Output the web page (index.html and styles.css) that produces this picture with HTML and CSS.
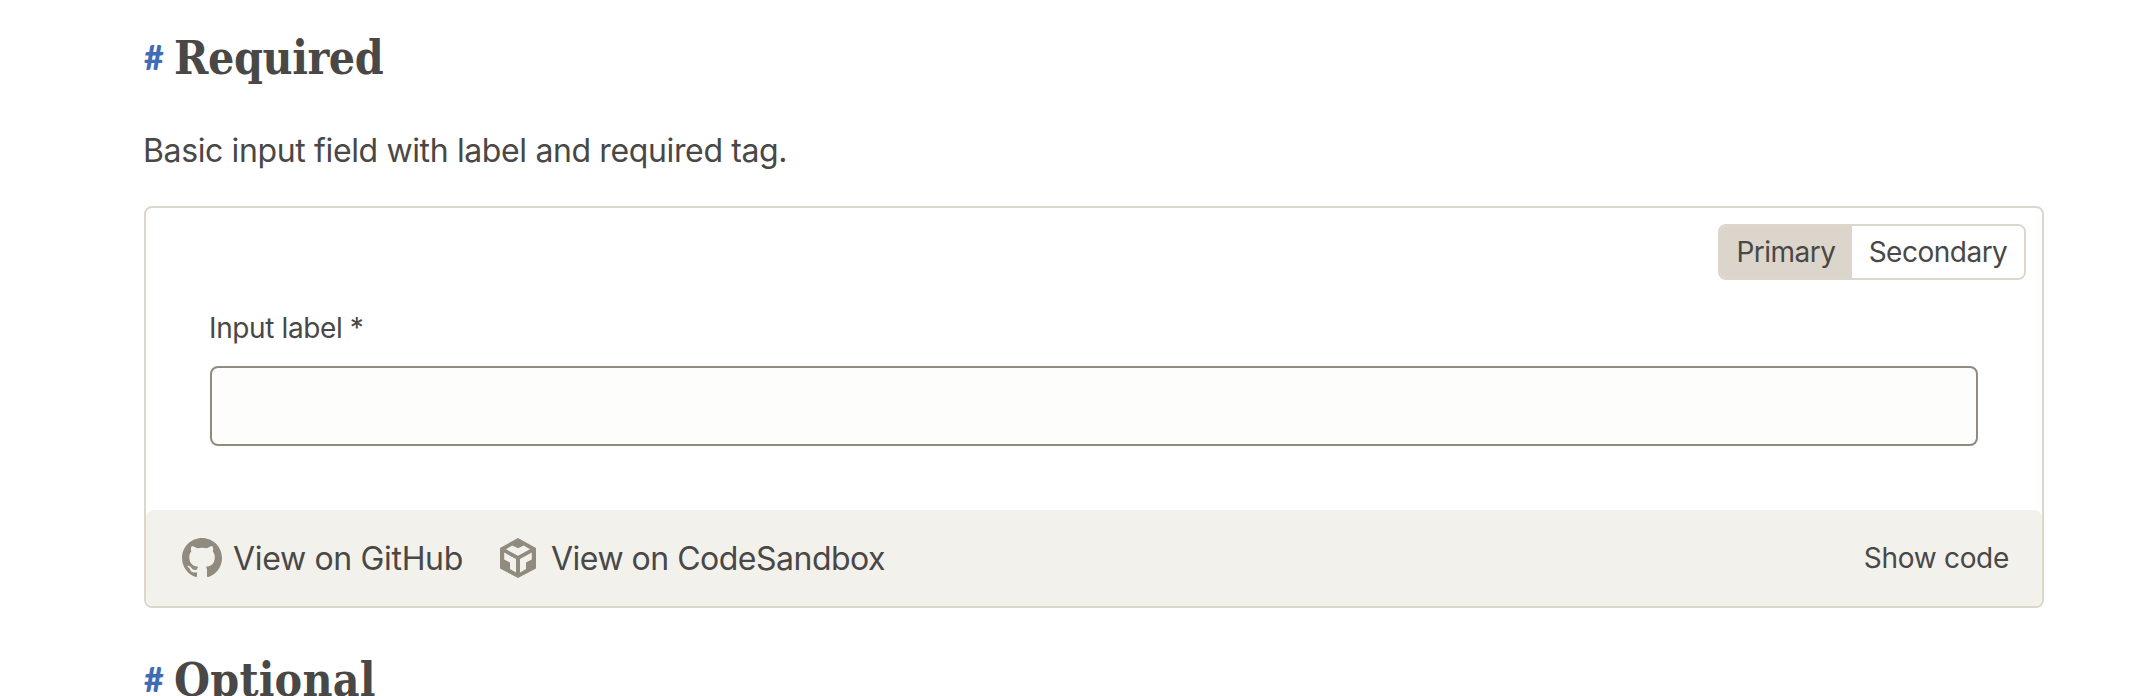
FILE: index.html
```
<!DOCTYPE html>
<html lang="en">
<head>
<meta charset="utf-8">
<title>Input</title>
<link rel="stylesheet" href="styles.css">
</head>
<body>
<main class="page">
  <h2 class="heading"><a class="anchor" href="#required">#</a><span class="title title-required">Required</span></h2>
  <p class="description">Basic input field with label and required tag.</p>
  <section class="card">
    <div class="preview">
      <div class="toggle">
        <button class="option option-active">Primary</button>
        <button class="option">Secondary</button>
      </div>
      <div class="field">
        <label class="label" for="demo">Input label *</label>
        <input class="input" id="demo" type="text">
      </div>
    </div>
    <footer class="footer">
      <a class="link link-github">
        <svg class="icon" viewBox="0 0 16 16"><path fill-rule="evenodd" d="M8 0C3.58 0 0 3.58 0 8c0 3.54 2.29 6.53 5.47 7.59.4.07.55-.17.55-.38 0-.19-.01-.82-.01-1.49-2.01.37-2.53-.49-2.69-.94-.09-.23-.48-.94-.82-1.13-.28-.15-.68-.52-.01-.53.63-.01 1.08.58 1.23.82.72 1.21 1.87.87 2.33.66.07-.52.28-.87.51-1.07-1.78-.2-3.64-.89-3.64-3.95 0-.87.31-1.59.82-2.15-.08-.2-.36-1.02.08-2.12 0 0 .67-.21 2.2.82.64-.18 1.32-.27 2-.27s1.36.09 2 .27c1.53-1.04 2.2-.82 2.2-.82.44 1.1.16 1.92.08 2.12.51.56.82 1.27.82 2.15 0 3.07-1.87 3.75-3.65 3.95.29.25.54.73.54 1.48 0 1.07-.01 1.93-.01 2.2 0 .21.15.46.55.38A8.01 8.01 0 0 0 16 8c0-4.42-3.58-8-8-8z"/></svg>
        View on GitHub
      </a>
      <a class="link link-sandbox">
        <svg class="icon icon-cube" viewBox="0 0 36 40"><path fill-rule="evenodd" d="M18 0L36 10V30.500L18 40L0 30.500V10ZM6 11.300L18 17.800L30 11.300L23.700 7.400L18 10.300L12.300 7.400ZM4.200 14.600V21.500L10 24.600V31L16 34.500V21ZM31.800 14.600L20 21V34.500L26 31V24.600L31.800 21.500Z"/></svg>
        View on CodeSandbox
      </a>
      <a class="show">Show code</a>
    </footer>
  </section>
  <h2 class="heading heading-next"><a class="anchor" href="#optional">#</a><span class="title title-optional">Optional</span></h2>
</main>
</body>
</html>
```
FILE: styles.css
```
* { box-sizing: border-box; }
body { margin: 0; background: #fff; color: #494846; font-family: Inter, "Liberation Sans", sans-serif; height: 696px; overflow: hidden; }
.page { padding: 28px 90px 0 144px; }
.heading { display: flex; align-items: flex-start; margin: 0; height: 60px; line-height: 60px; }
.anchor { width: 30px; color: #3f6db5; font-family: Lato, sans-serif; font-size: 34px; line-height: 58px; font-weight: 900; text-decoration: none; }
.title { font-family: "DejaVu Serif Condensed", "DejaVu Serif", serif; font-size: 46px; font-weight: 700; }
.title-required { letter-spacing: -.4px; }
.title-optional { letter-spacing: .2px; }
.description { margin: 39px 0 31px -1px; height: 48px; font-size: 32px; line-height: 48px; letter-spacing: -.37px; }
.card { height: 402px; border: 2px solid #dcd6cb; border-radius: 8px; display: flex; flex-direction: column; }
.preview { flex: 1; display: flex; flex-direction: column; padding: 16px; }
.toggle { display: flex; align-self: flex-end; width: 308px; height: 56px; border: 2px solid #dcd6cb; border-radius: 8px; overflow: hidden; }
.option { flex: 1; padding: 0; border: 0; background: #fff; color: inherit; font: 28px Inter, sans-serif; letter-spacing: -.5px; }
.option-active { flex: 0 0 132px; background: #dcd5cb; }
.field { padding: 26px 48px 0; display: flex; flex-direction: column; }
.label { height: 60px; line-height: 44px; font-size: 28px; letter-spacing: -.38px; margin-left: -1px; }
.input { width: 100%; height: 80px; border: 2px solid #918a7e; border-radius: 8px; background: #fdfdfb; }
.footer { height: 96px; border-radius: 8px; background: #f3f1ec; display: flex; align-items: center; padding: 0 33px 0 36px; font-size: 32px; }
.link { display: flex; align-items: center; gap: 12px; white-space: nowrap; }
.link-github { width: 318px; gap: 11px; letter-spacing: -.33px; }
.link-sandbox { gap: 15px; letter-spacing: -.5px; }
.icon { width: 40px; height: 40px; fill: #918a7e; }
.icon-cube { width: 36px; }
.show { margin-left: auto; font-size: 28px; letter-spacing: -.3px; }
.heading-next { margin-top: 42px; }
```
